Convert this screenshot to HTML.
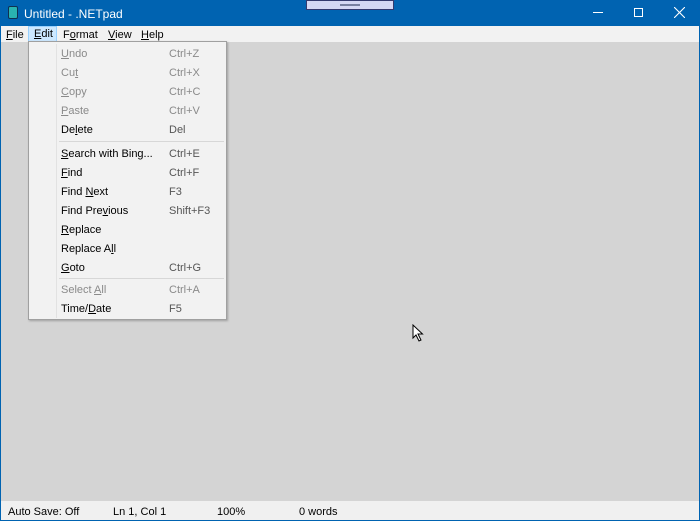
<!DOCTYPE html>
<html><head><style>
*{margin:0;padding:0;box-sizing:border-box}
body{width:700px;height:521px;overflow:hidden;position:relative;background:#d4d4d4;font-family:"Liberation Sans",sans-serif;font-size:11px;color:#000}
.title{position:absolute;left:0;top:0;width:700px;height:26px;background:#0063b1;color:#fff;font-size:12px}
.menubar{position:absolute;left:0;top:26px;width:700px;height:16px;background:#f2f2f2}
.mb{position:absolute;top:2px;height:15px;line-height:14px}
.status{position:absolute;left:0;top:501px;width:700px;height:20px;background:#f0f0f0;border:1px solid #0063b1;border-top:none;font-size:11px}
.status span{position:absolute;top:5px}
.menu{position:absolute;left:28px;top:41px;width:199px;height:279px;background:#f2f2f2;border:1px solid #a0a0a0;box-shadow:1px 1px 2px rgba(0,0,0,.25)}
.menu .col{position:absolute;left:27px;top:2px;width:1px;height:274px;background:#e2e2e2}
.it{position:absolute;left:32px;height:16px;line-height:16px}
.sc{position:absolute;left:140px;height:16px;line-height:16px;color:#555}
.dis{color:#8a8a8a}
.sep{position:absolute;left:30px;width:165px;height:1px;background:#d7d7d7}
u{text-decoration:underline}
.edge{position:absolute;top:26px;width:1px;height:476px;background:#0063b1}
</style></head><body>
<div class="title">
 <div style="position:absolute;left:8px;top:6px;width:10px;height:13px;background:#2ab3b0;border-radius:2px;border:1px solid #103050"></div>
 <div style="position:absolute;left:24px;top:7px">Untitled - .NETpad</div>
 <div style="position:absolute;left:306px;top:0;width:88px;height:10px;background:#d4d8f4;border:1px solid #333a6e"><div style="position:absolute;left:33px;top:3px;width:20px;height:2px;background:#7780a0"></div></div>
 <div style="position:absolute;left:593px;top:12px;width:10px;height:1px;background:#fff"></div>
 <div style="position:absolute;left:634px;top:8px;width:9px;height:9px;border:1px solid #fff"></div>
 <svg style="position:absolute;left:674px;top:7px" width="11" height="11"><path d="M0 0L11 11M11 0L0 11" stroke="#fff" stroke-width="1.1"/></svg>
</div>
<div class="menubar">
 <span class="mb" style="left:6px"><u>F</u>ile</span>
 <span class="mb" style="left:28px;width:29px;background:#cce8ff;border:1px solid #99d1ff;padding-left:5px;top:0;height:16px;line-height:15px"><u>E</u>dit</span>
 <span class="mb" style="left:63px">F<u>o</u>rmat</span>
 <span class="mb" style="left:108px"><u>V</u>iew</span>
 <span class="mb" style="left:141px"><u>H</u>elp</span>
</div>
<div class="edge" style="left:0"></div><div class="edge" style="left:699px"></div>
<div class="menu">
 <div class="col"></div>
 <div class="it dis" style="top:4px"><u>U</u>ndo</div><div class="sc dis" style="top:4px">Ctrl+Z</div>
 <div class="it dis" style="top:23px">Cu<u>t</u></div><div class="sc dis" style="top:23px">Ctrl+X</div>
 <div class="it dis" style="top:42px"><u>C</u>opy</div><div class="sc dis" style="top:42px">Ctrl+C</div>
 <div class="it dis" style="top:61px"><u>P</u>aste</div><div class="sc dis" style="top:61px">Ctrl+V</div>
 <div class="it" style="top:80px">De<u>l</u>ete</div><div class="sc" style="top:80px">Del</div>
 <div class="sep" style="top:99px"></div>
 <div class="it" style="top:104px"><u>S</u>earch with Bing...</div><div class="sc" style="top:104px">Ctrl+E</div>
 <div class="it" style="top:123px"><u>F</u>ind</div><div class="sc" style="top:123px">Ctrl+F</div>
 <div class="it" style="top:142px">Find <u>N</u>ext</div><div class="sc" style="top:142px">F3</div>
 <div class="it" style="top:161px">Find Pre<u>v</u>ious</div><div class="sc" style="top:161px">Shift+F3</div>
 <div class="it" style="top:180px"><u>R</u>eplace</div>
 <div class="it" style="top:199px">Replace A<u>l</u>l</div>
 <div class="it" style="top:218px"><u>G</u>oto</div><div class="sc" style="top:218px">Ctrl+G</div>
 <div class="sep" style="top:236px"></div>
 <div class="it dis" style="top:240px">Select <u>A</u>ll</div><div class="sc dis" style="top:240px">Ctrl+A</div>
 <div class="it" style="top:259px">Time/<u>D</u>ate</div><div class="sc" style="top:259px">F5</div>
</div>
<svg style="position:absolute;left:412px;top:324px" width="12" height="18"><path d="M1 1L1 14L4 11L7 17L9 16L6 10L10.5 10Z" fill="#fff" stroke="#000" stroke-width="1"/></svg>
<div class="status">
 <span style="left:7px">Auto Save: Off</span>
 <span style="left:112px">Ln 1, Col 1</span>
 <span style="left:216px">100%</span>
 <span style="left:298px">0 words</span>
</div>
</body></html>
